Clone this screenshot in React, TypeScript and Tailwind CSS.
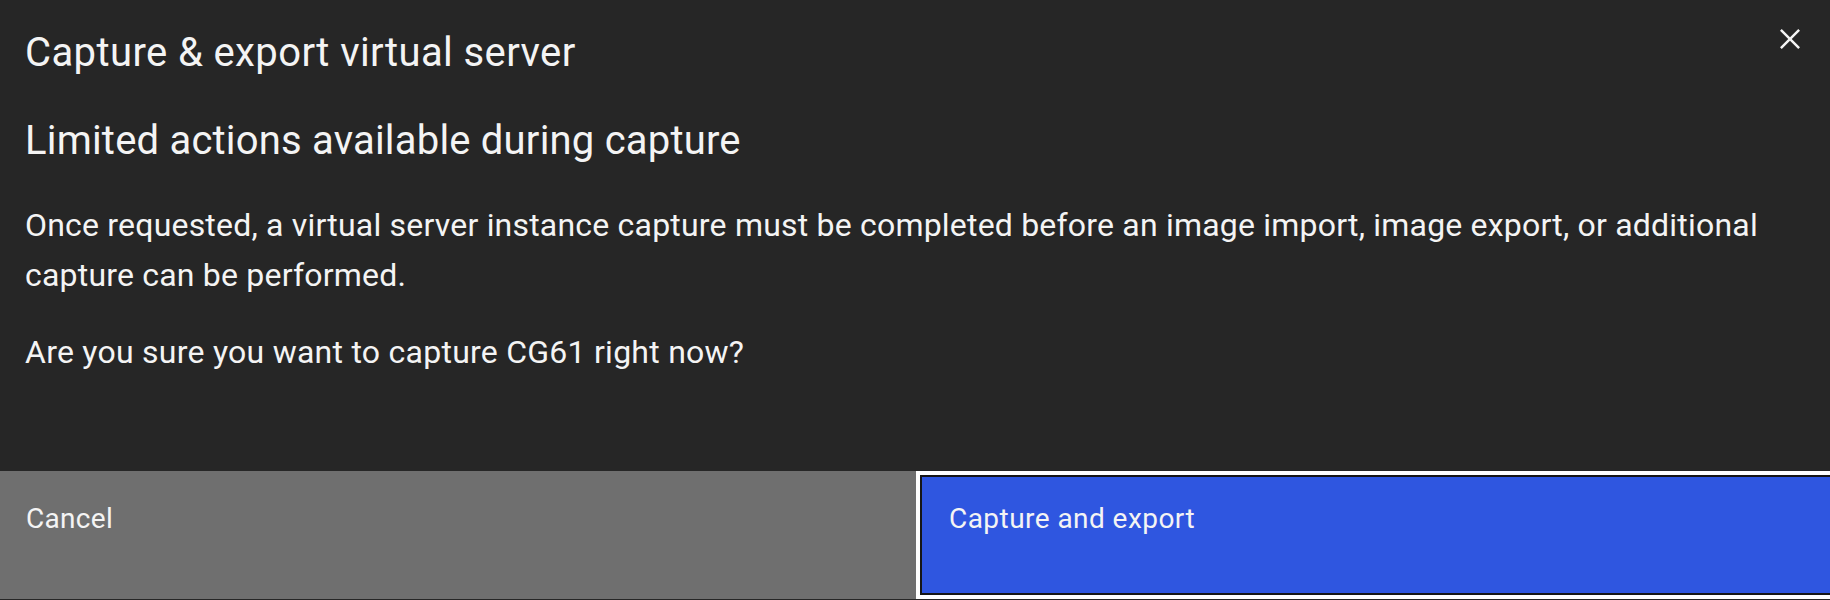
function CloseIcon() {
  return (
    <svg width="40" height="40" viewBox="0 0 32 32" fill="#f4f4f4" aria-hidden="true">
      <path d="M24 9.4L22.6 8 16 14.6 9.4 8 8 9.4 14.6 16 8 22.6 9.4 24 16 17.4 22.6 24 24 22.6 17.4 16 24 9.4z" />
    </svg>
  );
}

export default function App() {
  return (
    <div
      className="relative w-[1830px] h-[600px] overflow-hidden bg-[#262626] text-[#f4f4f4] flex flex-col"
      style={{ fontFamily: 'Roboto, "Noto Sans", sans-serif' }}
    >
      <button className="absolute right-[20px] top-[19px] text-[#f4f4f4]" aria-label="Close">
        <CloseIcon />
      </button>

      {/* Header */}
      <div className="pl-[25px] pr-[40px] pt-[25px]">
        <h2 className="text-[40px] leading-[56px] font-normal tracking-[0.4px]">Capture &amp; export virtual server</h2>
      </div>

      {/* Body */}
      <div className="pl-[25px] pr-[30px] pt-[32px]">
        <h3 className="text-[40px] leading-[56px] font-normal tracking-[0.2px]">
          Limited actions available during capture
        </h3>
        <p className="mt-[31px] text-[32px] leading-[50px] tracking-[0.2px] max-w-[1790px]">
          Once requested, a virtual server instance capture must be completed before an image import, image export, or
          additional capture can be performed.
        </p>
        <p className="mt-[27px] text-[32px] leading-[50px] tracking-[0.25px]">
          Are you sure you want to capture CG61 right now?
        </p>
      </div>

      {/* Footer */}
      <div className="mt-auto mb-px h-[128px] flex overflow-hidden">
        <button className="w-[916px] shrink-0 bg-[#6f6f6f] text-left pl-[26px] pt-[30px] flex items-start">
          <span className="text-[28px] leading-[36px] tracking-[0.3px]">Cancel</span>
        </button>
        <button className="w-[930px] shrink-0 bg-[#2f56e0] text-left flex items-start border-[4px] border-white">
          <span className="flex-1 self-stretch border-2 border-[#161616] pl-[27px] pt-[24px] text-[28px] leading-[36px] tracking-[0.45px]">
            Capture and export
          </span>
        </button>
      </div>
    </div>
  );
}
